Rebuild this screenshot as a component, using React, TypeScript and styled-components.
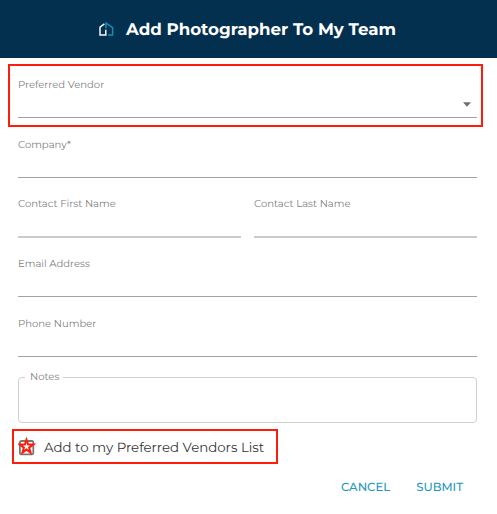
import React from 'react';
import styled, { createGlobalStyle } from 'styled-components';

const GlobalStyle = createGlobalStyle`
  * { box-sizing: border-box; }
  body {
    margin: 0;
    background: #fff;
    font-family: Montserrat, Inter, sans-serif;
    text-rendering: geometricPrecision;
  }
`;

const Dialog = styled.div`
  width: 497px;
  height: 514px;
  display: flex;
  flex-direction: column;
  background: #fff;
  overflow: hidden;
`;

const Header = styled.header`
  height: 58px;
  flex: none;
  display: flex;
  align-items: center;
  gap: 11px;
  padding-left: 98px;
  background: #04304f;
  color: #fff;
`;

const Title = styled.h1`
  margin: 0;
  padding-top: 2px;
  font-size: 16.67px;
  line-height: 20px;
  font-weight: 700;
  white-space: nowrap;
`;

const Form = styled.form`
  display: flex;
  flex-direction: column;
  padding: 0 20px 0 18px;
`;

const FieldRow = styled.div`
  display: grid;
  grid-template-columns: 223px 223px;
  column-gap: 13px;
`;

const Field = styled.div<{ $height?: number; $top?: number; $soft?: boolean }>`
  position: relative;
  height: ${p => p.$height ?? 60}px;
  padding-top: ${p => p.$top ?? 20}px;
  border-bottom: ${p => (p.$soft ? '2px solid #cacaca' : '1px solid #a3a3a3')};
`;

const Label = styled.label`
  display: block;
  font-size: 10.05px;
  line-height: 14px;
  color: #808080;
  white-space: nowrap;
`;

const Caret = styled.svg`
  position: absolute;
  right: 6px;
  bottom: 10px;
`;

const Outline = styled.div<{ $inset: string }>`
  position: absolute;
  inset: ${p => p.$inset};
  border: 2px solid #ff1d0a;
  pointer-events: none;
`;

const Notes = styled.fieldset`
  height: 53px;
  margin: 13px 0 0;
  padding: 0 0 0 6px;
  border: 1px solid #cfcfcf;
  border-radius: 4px;
  min-width: 0;
`;

const Legend = styled.legend`
  padding: 0 4px 0 5px;
  font-size: 10.05px;
  line-height: 14px;
  color: #808080;
`;

const CheckRow = styled.div`
  position: relative;
  display: flex;
  align-items: center;
  gap: 8px;
  height: 35px;
  margin-top: 6px;
`;

const CheckLabel = styled.span`
  padding-top: 2px;
  font-size: 13.33px;
  line-height: 20px;
  color: #353535;
  white-space: nowrap;
`;

const Actions = styled.div`
  display: flex;
  gap: 26px;
  margin-top: 13px;
  padding-left: 323px;
`;

const Action = styled.button`
  padding: 0;
  border: 0;
  background: none;
  font-family: inherit;
  font-size: 11.67px;
  line-height: 20px;
  font-weight: 500;
  text-rendering: inherit;
  color: #1c98bf;
`;

const HouseLogo = () => (
  <svg width="17" height="16" viewBox="0 0 17 16" fill="none" strokeWidth="1.5">
    <path d="M6.4 2.9 2 6.2V14H7.8V8.8" stroke="#f4f8fa" />
    <path d="M8 7.2V1.9L14.6 6.6V14H10.2" stroke="#168db8" />
  </svg>
);

const StarCheckbox = () => (
  <svg width="18" height="20" viewBox="0 0 18 20" fill="none">
    <rect x="1.9" y="4" width="13.4" height="13.4" rx="1.5" stroke="#777" strokeWidth="1.8" />
    <path
      d="M8.5 2.7 10.1 7.5H15.2L11.1 10.6 12.6 15.6 8.5 12.6 4.4 15.6 5.9 10.6 1.8 7.5H6.9Z"
      fill="#fff"
      stroke="#ff1d0a"
      strokeWidth="2"
    />
  </svg>
);

export default function App() {
  return (
    <>
      <GlobalStyle />
      <Dialog>
        <Header>
          <HouseLogo />
          <Title>Add Photographer To My Team</Title>
        </Header>
        <Form>
          <Field>
            <Label>Preferred Vendor</Label>
            <Caret width="8" height="5" viewBox="0 0 8 5">
              <path d="M0 .3H8L4 4.7Z" fill="#6e6e6e" />
            </Caret>
            <Outline $inset="6px -6px -10px -10px" />
          </Field>
          <Field>
            <Label>Company*</Label>
          </Field>
          <FieldRow>
            <Field $soft $top={19}>
              <Label>Contact First Name</Label>
            </Field>
            <Field $soft $top={19}>
              <Label>Contact Last Name</Label>
            </Field>
          </FieldRow>
          <Field $height={59} $top={19}>
            <Label>Email Address</Label>
          </Field>
          <Field>
            <Label>Phone Number</Label>
          </Field>
          <Notes>
            <Legend>Notes</Legend>
          </Notes>
          <CheckRow>
            <StarCheckbox />
            <CheckLabel>Add to my Preferred Vendors List</CheckLabel>
            <Outline $inset="0 199px 0 -6px" />
          </CheckRow>
          <Actions>
            <Action type="button">CANCEL</Action>
            <Action type="button">SUBMIT</Action>
          </Actions>
        </Form>
      </Dialog>
    </>
  );
}
